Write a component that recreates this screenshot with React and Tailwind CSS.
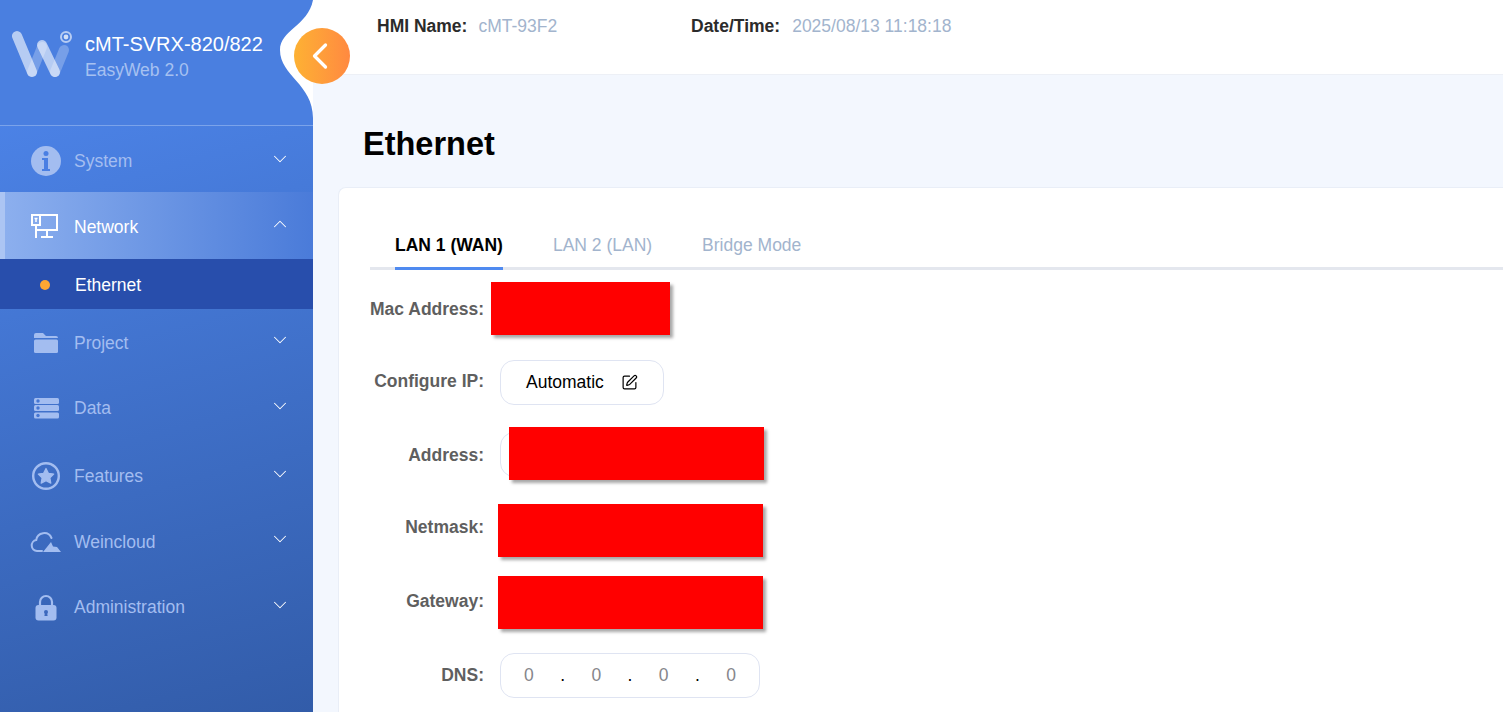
import { ChevronDown, ChevronUp, ChevronLeft, SquarePen } from "lucide-react";

const InfoIcon = () => (
  <svg width="32" height="32" viewBox="0 0 32 32">
    <circle cx="16" cy="16" r="15" fill="currentColor" />
    <circle cx="16" cy="8.500" r="2.500" fill="#4a7fe3" />
    <path d="M12 13h6v11h2v2h-8v-2h2v-9h-2z" fill="#4a7fe3" />
  </svg>
);

const NetworkIcon = () => (
  <svg width="28" height="24" viewBox="0 0 28 24" fill="none" stroke="currentColor" strokeWidth="2">
    <path d="M9 1h17v15H5" />
    <rect x="1" y="1" width="8" height="10" />
    <path d="M3.500 4.500h3M5 5v3" strokeWidth="1.500" />
    <path d="M5 11v13" />
    <path d="M16 16v7M10 23h12" />
  </svg>
);

const FolderIcon = () => (
  <svg width="26" height="22" viewBox="0 0 26 22" fill="currentColor">
    <path d="M1 5V3a2 2 0 0 1 2-2h7l3 3h10a2 2 0 0 1 2 2H1z" />
    <rect x="1" y="7.500" width="24" height="13.500" rx="1.500" />
  </svg>
);

const DataIcon = () => (
  <svg width="26" height="22" viewBox="0 0 26 22">
    <g fill="currentColor">
      <rect x="1" y="1" width="25" height="6" rx="1.500" />
      <rect x="1" y="8" width="25" height="6" rx="1.500" />
      <rect x="1" y="15.500" width="25" height="6" rx="1.500" />
    </g>
    <g fill="#4576d3">
      <circle cx="5" cy="4" r="1.700" />
      <circle cx="5" cy="11" r="1.700" />
      <circle cx="5" cy="18.500" r="1.700" />
    </g>
  </svg>
);

const StarIcon = () => (
  <svg width="30" height="30" viewBox="0 0 30 30">
    <circle cx="15" cy="15" r="12.800" fill="none" stroke="currentColor" strokeWidth="2.400" />
    <path
      d="M15 7.500l2.400 4.800 5.300.8-3.800 3.700.9 5.300-4.800-2.500-4.800 2.500.9-5.300-3.800-3.700 5.300-.8z"
      fill="currentColor"
      stroke="currentColor"
      strokeWidth="1.200"
      strokeLinejoin="round"
    />
  </svg>
);

const CloudIcon = () => (
  <svg width="32" height="22" viewBox="0 0 32 22" fill="none">
    <path
      d="M12 20H7a5.500 5.500 0 0 1-.8-10.900A8 8 0 0 1 21.500 7"
      stroke="currentColor"
      strokeWidth="2"
      strokeLinecap="round"
    />
    <path d="M13 21l8-10 2 4.500 4 .5 4 5z" fill="currentColor" />
  </svg>
);

const LockIcon = () => (
  <svg width="24" height="27" viewBox="0 0 24 27">
    <path d="M6 12V8a6 6 0 0 1 12 0v4" fill="none" stroke="currentColor" strokeWidth="2.200" />
    <rect x="1.500" y="11" width="21" height="15.500" rx="3" fill="currentColor" />
    <circle cx="12" cy="18" r="2" fill="#3d69bd" />
    <path d="M11 18h2l.6 4h-3.200z" fill="#3d69bd" />
  </svg>
);

const Logo = () => (
  <svg width="64" height="50" viewBox="0 0 64 50" fill="none" strokeLinecap="round">
    <path d="M20 43l10-25" stroke="#fff" strokeOpacity="0.25" strokeWidth="10" />
    <path d="M43 43l9-22" stroke="#fff" strokeOpacity="0.25" strokeWidth="10" />
    <path d="M5 7l15 36" stroke="#fff" strokeOpacity="0.6" strokeWidth="10" />
    <path d="M30 16l13 27" stroke="#fff" strokeOpacity="0.6" strokeWidth="10" />
    <circle cx="54" cy="8" r="5" stroke="#fff" strokeOpacity="0.6" strokeWidth="2" />
    <circle cx="54" cy="8" r="2.400" fill="#fff" fillOpacity="0.75" />
  </svg>
);

const menu = [
  { label: "System", icon: <InfoIcon />, pad: "pt-[4px]" },
  { label: "Network", icon: <NetworkIcon />, open: true },
  { label: "Project", icon: <FolderIcon />, pad: "pt-[1px]" },
  { label: "Data", icon: <DataIcon />, pad: "pb-[1px]" },
  { label: "Features", icon: <StarIcon />, pad: "pt-[2px]" },
  { label: "Weincloud", icon: <CloudIcon />, pad: "pt-[1px]" },
  { label: "Administration", icon: <LockIcon />, pad: "pb-[1px]" },
];

function MenuRow({ item }) {
  if (item.open) {
    return (
      <>
        <div className="h-[67px] flex items-center pt-[3px] pr-[22px] bg-gradient-to-r from-[#8cafee] to-[#4a7bd9] border-l-[5px] border-[#acc5f3] text-white">
          <div className="w-[32px] ml-[25px] mr-[12px] pr-[2px] mb-[3px] flex justify-center shrink-0">{item.icon}</div>
          <span className="flex-1">{item.label}</span>
          <ChevronUp size={22} strokeWidth={1.100} className="mb-[7px]" />
        </div>
        <div className="h-[50px] flex items-center pt-[1px] bg-[#284eac] text-white">
          <span className="w-[10px] h-[10px] rounded-full bg-[#ffa733] ml-[40px] mr-[25px]" />
          <span>Ethernet</span>
        </div>
      </>
    );
  }
  return (
    <div className={`h-[66.300px] flex items-center pr-[22px] text-[#a3bdf0] ${item.pad}`}>
      <div className="w-[32px] ml-[30px] mr-[12px] flex justify-center shrink-0">{item.icon}</div>
      <span className="flex-1">{item.label}</span>
      <ChevronDown size={22} strokeWidth={1.100} className="text-white mb-[5px]" />
    </div>
  );
}

const redBlock = "bg-[#ff0000] h-[53px] shadow-[3px_3px_3px_rgba(0,0,0,0.35)]";
const inputBox = "h-[45px] rounded-[14px] border border-[#dfe4f2] bg-white";

function Label({ children, className = "" }) {
  return (
    <div className={`w-[114px] text-right whitespace-nowrap font-bold text-[#5f5f5f] shrink-0 ${className}`}>
      {children}
    </div>
  );
}

export default function App() {
  return (
    <div className="h-screen w-full flex overflow-hidden bg-[#f3f7fe] text-[17.500px] font-['Liberation_Sans',Arial,sans-serif]">
      <aside className="relative w-[313px] shrink-0 flex flex-col bg-[linear-gradient(165deg,#5089f1,#325ca9)]">
        <div className="h-[126px] flex items-start pl-[12px] pt-[29px] border-b border-[#7ba3ea] bg-[#4a7fe0]">
          <Logo />
          <div className="ml-[9px] pt-[3px]">
            <div className="text-white text-[20px] leading-[24px]">cMT-SVRX-820/822</div>
            <div className="text-[#a6c1f1] leading-[26px] mt-px">EasyWeb 2.0</div>
          </div>
        </div>
        <nav className="flex flex-col">
          {menu.map((item) => (
            <MenuRow key={item.label} item={item} />
          ))}
        </nav>
        {/* white notch behind the collapse button */}
        <svg className="absolute top-0 right-0" width="36" height="118" viewBox="0 0 36 118">
          <path d="M36 0 C31 26 3 30 3 50 C3 76 36 84 36 118 Z" fill="#fff" />
        </svg>
        <button className="absolute top-[28px] left-[294px] z-10 w-[56px] h-[56px] rounded-full flex items-center justify-center pr-[4px] bg-gradient-to-r from-[#fdb133] to-[#ff8940] text-white">
          <ChevronLeft size={44} strokeWidth={1.800} />
        </button>
      </aside>

      <main className="flex-1 min-w-0 flex flex-col">
        <header className="h-[75px] shrink-0 bg-white border-b border-[#edf0f6] flex items-start pt-[13px] pl-[64px]">
          <div className="w-[314px] flex gap-[11px]">
            <span className="font-bold text-[#2b2b2b]">HMI Name:</span>
            <span className="text-[#a2b4cd]">cMT-93F2</span>
          </div>
          <div className="flex gap-[12px]">
            <span className="font-bold text-[#2b2b2b]">Date/Time:</span>
            <span className="text-[#a2b4cd]">2025/08/13 11:18:18</span>
          </div>
        </header>

        <h1 className="text-[32.500px] font-bold text-black pl-[50px] mt-[49px] leading-[40px]">Ethernet</h1>

        <section className="flex-1 mt-[23px] ml-[25px] bg-white rounded-tl-[8px] border-l border-t border-[#e9eef7] pl-[31px] pt-[37px]">
          <div className="flex border-b-[3px] border-[#e4e7ee] h-[45px] pl-[25px] gap-[50px]">
            <div className="h-[45px] border-b-[3px] border-[#4f8af0] font-bold text-black pt-[7px]">LAN 1 (WAN)</div>
            <div className="text-[#a2b4cd] pt-[7px]">LAN 2 (LAN)</div>
            <div className="text-[#a2b4cd] pt-[7px]">Bridge Mode</div>
          </div>

          <div className="flex items-center h-[53px] mt-[12px]">
            <Label className="pt-[1px]">Mac Address:</Label>
            <div className={`${redBlock} w-[179px] ml-[7px]`} />
          </div>

          <div className="flex items-center h-[45px] mt-[25px]">
            <Label className="mb-[2px]">Configure IP:</Label>
            <div className={`${inputBox} w-[164px] ml-[16px] flex items-center pl-[25px] text-black`}>
              <span>Automatic</span>
              <SquarePen size={17} strokeWidth={1.700} className="ml-[17px]" />
            </div>
          </div>

          <div className="flex items-center h-[45px] mt-[27px]">
            <Label className="pt-[1px]">Address:</Label>
            <div className={`${inputBox} relative w-[260px] ml-[16px]`}>
              <div className={`${redBlock} absolute top-[-6px] left-[8px] w-[255px]`} />
            </div>
          </div>

          <div className="flex items-center h-[53px] mt-[27px]">
            <Label className="mb-[7px]">Netmask:</Label>
            <div className={`${redBlock} w-[265px] ml-[14px]`} />
          </div>

          <div className="flex items-center h-[53px] mt-[19px]">
            <Label className="mb-[3px]">Gateway:</Label>
            <div className={`${redBlock} w-[265px] ml-[14px]`} />
          </div>

          <div className="flex items-center h-[45px] mt-[24px]">
            <Label>DNS:</Label>
            <div className={`${inputBox} w-[260px] ml-[16px] flex items-center justify-between px-[23px]`}>
              <span className="text-[#86868b]">0</span>
              <span className="text-black">.</span>
              <span className="text-[#86868b]">0</span>
              <span className="text-black">.</span>
              <span className="text-[#86868b]">0</span>
              <span className="text-black">.</span>
              <span className="text-[#86868b]">0</span>
            </div>
          </div>
        </section>
      </main>
    </div>
  );
}
